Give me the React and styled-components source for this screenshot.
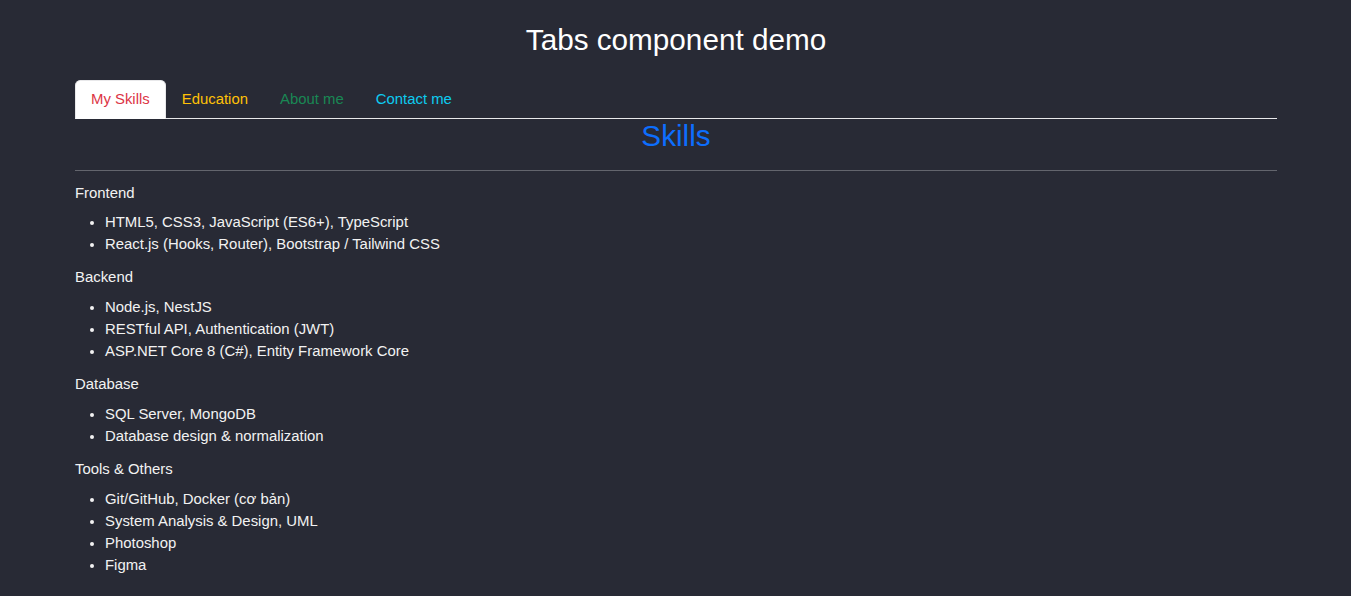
import React, { useState } from "react";
import styled, { createGlobalStyle } from "styled-components";

const Global = createGlobalStyle`
  html, body { margin: 0; padding: 0; }
  body {
    background: #282a35;
    color: #f2f2f2;
    font-family: "Liberation Sans", Arial, sans-serif;
    font-size: 14.9px;
    line-height: 1.5;
  }
`;

const Page = styled.div`
  padding: 0 74px 20px 75px;
`;

const Title = styled.h1`
  margin: 23px 0 22.4px;
  text-align: center;
  font-size: 29.7px;
  font-weight: 400;
  line-height: 34.6px;
  color: #ffffff;
`;

const TabBar = styled.ul`
  display: flex;
  list-style: none;
  margin: 0;
  padding: 0;
  border-bottom: 1px solid #e8e8ea;
`;

const Tab = styled.li`
  margin-bottom: -1px;
`;

const TabButton = styled.button`
  display: block;
  font: inherit;
  font-size: 14.9px;
  line-height: 21.6px;
  padding: 7.7px 15px;
  border: 1px solid ${(p) => (p.$active ? "#e8e8ea" : "transparent")};
  border-bottom-color: ${(p) => (p.$active ? "#fff" : "transparent")};
  border-radius: 5.4px 5.4px 0 0;
  background: ${(p) => (p.$active ? "#ffffff" : "transparent")};
  color: ${(p) => p.$color};
  cursor: pointer;
`;

const SectionTitle = styled.h2`
  margin: 0;
  text-align: center;
  font-size: 29.7px;
  font-weight: 400;
  line-height: 34.6px;
  color: #0d6efd;
`;

const Rule = styled.hr`
  margin: 16px 0 12px;
  border: 0;
  border-top: 1px solid rgba(255, 255, 255, 0.28);
`;

const Group = styled.div`
  margin-bottom: 12.5px;
`;

const GroupTitle = styled.p`
  margin: 0 0 6.8px;
  line-height: 21.6px;
`;

const Items = styled.ul`
  margin: 0;
  padding-left: 30px;
  line-height: 22px;
`;

const tabs = [
  { id: "skills", label: "My Skills", color: "#dc3545" },
  { id: "edu", label: "Education", color: "#ffc107" },
  { id: "about", label: "About me", color: "#198754" },
  { id: "contact", label: "Contact me", color: "#0dcaf0" },
];

const groups = [
  {
    title: "Frontend",
    items: [
      "HTML5, CSS3, JavaScript (ES6+), TypeScript",
      "React.js (Hooks, Router), Bootstrap / Tailwind CSS",
    ],
  },
  {
    title: "Backend",
    items: [
      "Node.js, NestJS",
      "RESTful API, Authentication (JWT)",
      "ASP.NET Core 8 (C#), Entity Framework Core",
    ],
  },
  {
    title: "Database",
    items: ["SQL Server, MongoDB", "Database design & normalization"],
  },
  {
    title: "Tools & Others",
    items: [
      "Git/GitHub, Docker (cơ bản)",
      "System Analysis & Design, UML",
      "Photoshop",
      "Figma",
    ],
  },
];

export default function App() {
  const [active, setActive] = useState("skills");
  return (
    <>
      <Global />
      <Page>
        <Title>Tabs component demo</Title>
        <TabBar>
          {tabs.map((t) => (
            <Tab key={t.id}>
              <TabButton
                $active={active === t.id}
                $color={t.color}
                onClick={() => setActive(t.id)}
              >
                {t.label}
              </TabButton>
            </Tab>
          ))}
        </TabBar>
        <SectionTitle>Skills</SectionTitle>
        <Rule />
        {groups.map((g) => (
          <Group key={g.title}>
            <GroupTitle>{g.title}</GroupTitle>
            <Items>
              {g.items.map((i) => (
                <li key={i}>{i}</li>
              ))}
            </Items>
          </Group>
        ))}
      </Page>
    </>
  );
}
